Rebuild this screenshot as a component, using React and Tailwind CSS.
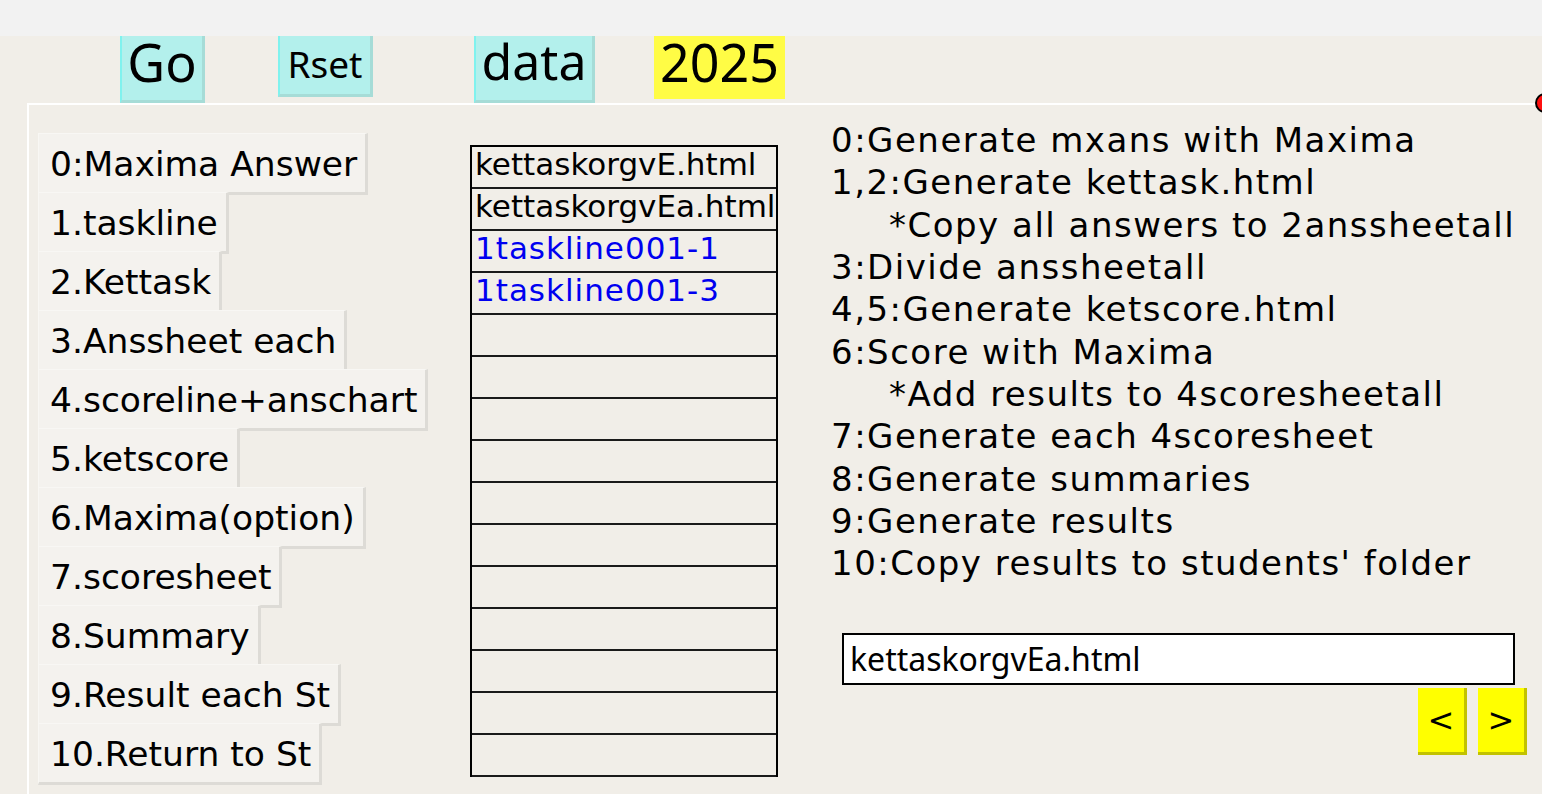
import React from 'react';

const steps = [
  '0:Maxima Answer',
  '1.taskline',
  '2.Kettask',
  '3.Anssheet each',
  '4.scoreline+anschart',
  '5.ketscore',
  '6.Maxima(option)',
  '7.scoresheet',
  '8.Summary',
  '9.Result each St',
  '10.Return to St',
];

const files = [
  { name: 'kettaskorgvE.html', color: 'text-black' },
  { name: 'kettaskorgvEa.html', color: 'text-black' },
  { name: '1taskline001-1', color: 'text-[#0000f0] tracking-[1px]' },
  { name: '1taskline001-3', color: 'text-[#0000f0] tracking-[1px]' },
];

const notes = [
  { text: '0:Generate mxans with Maxima' },
  { text: '1,2:Generate kettask.html' },
  { text: '*Copy all answers to 2anssheetall', indent: true },
  { text: '3:Divide anssheetall' },
  { text: '4,5:Generate ketscore.html' },
  { text: '6:Score with Maxima' },
  { text: '*Add results to 4scoresheetall', indent: true },
  { text: '7:Generate each 4scoresheet' },
  { text: '8:Generate summaries' },
  { text: '9:Generate results' },
  { text: "10:Copy results to students' folder" },
];

const TopButton = ({ label, className }) => (
  <div
    className={`flex justify-center bg-[#b3f0ec] border-l-2 border-l-[#80f2ee] border-r-[3px] border-b-[3px] border-r-[#a6dcd7] border-b-[#a6dcd7] font-['Noto_Sans',sans-serif] text-black leading-none ${className}`}
  >
    {label}
  </div>
);

const App = () => {
  const rows = [...files, ...Array(15 - files.length).fill(null)];

  return (
    <div className="w-[1542px] h-[794px] overflow-hidden bg-[#f1eee8] relative font-['DejaVu_Sans',sans-serif]">
      {/* title strip */}
      <div className="h-[36px] bg-[#f2f2f2]"></div>

      {/* top buttons */}
      <div className="flex items-start h-[67px]">
        <TopButton label="Go" className="ml-[120px] w-[85px] h-[67px] text-[52px] pt-[0px]" />
        <TopButton label="Rset" className="ml-[73px] w-[95px] h-[61px] text-[37px] pt-[9px]" />
        <TopButton label="data" className="ml-[101px] w-[121px] h-[67px] text-[50px] pt-[0px]" />
        <div className="ml-[59px] w-[131px] h-[63px] bg-[#fffc45] flex justify-center font-['Noto_Sans',sans-serif] text-[52px] leading-none pt-[0px]">
          2025
        </div>
      </div>

      {/* main panel */}
      <div className="ml-[27px] border-l-2 border-t-2 border-white flex h-[700px]">
        {/* step buttons */}
        <div className="w-[441px] pl-[9px] pt-[28px] flex flex-col items-start">
          {steps.map((s, i) => (
            <button
              key={s}
              className={`h-[62px] pl-[11px] pr-[8px] pt-[3px] flex items-center bg-[#f4f2ee] border-t border-l border-[#f8f7f4] border-r-[3px] border-b-[3px] border-r-[#dddbd6] border-b-[#dddbd6] text-[34.5px] text-black leading-none whitespace-nowrap ${i > 0 ? '-mt-[3px]' : ''}`}
            >
              {s}
            </button>
          ))}
        </div>

        {/* file list */}
        <div className="w-[308px] mt-[40px]">
          <div className="border-2 border-black border-b-0">
            {rows.map((r, i) => (
              <div
                key={i}
                className="h-[42px] border-b-2 border-[#1a1a1a] px-[3px] text-[31px] leading-[34px] whitespace-nowrap overflow-hidden"
              >
                {r && <span className={r.color}>{r.name}</span>}
              </div>
            ))}
          </div>
        </div>

        {/* notes */}
        <div className="flex-1 pl-[53px] pt-[14px] flex flex-col">
          {notes.map((n) => (
            <div
              key={n.text}
              className={`h-[42.3px] flex items-center text-[34px] tracking-[1.5px] text-black leading-none whitespace-nowrap ${n.indent ? 'pl-[58px]' : ''}`}
            >
              {n.text}
            </div>
          ))}
          <div className="mt-[49px] ml-[11px] w-[673px] h-[52px] bg-white border-2 border-black flex items-center px-[6px] font-['Noto_Sans',sans-serif] text-[32px] leading-none">
            kettaskorgvEa.html
          </div>
          <div className="flex justify-end gap-[11px] pr-[15px] mt-[3px]">
            {['<', '>'].map((a) => (
              <button
                key={a}
                className="w-[49px] h-[67px] bg-[#ffff00] border-r-[3px] border-b-[3px] border-[#c2c200] flex items-center justify-center text-[32px] leading-none text-black"
              >
                {a}
              </button>
            ))}
          </div>
        </div>
      </div>

      {/* corner marker */}
      <div className="absolute left-[1535px] top-[93px] w-[20px] h-[20px] rounded-full bg-[#ff1010] border-2 border-black"></div>
    </div>
  );
};

export default App;
